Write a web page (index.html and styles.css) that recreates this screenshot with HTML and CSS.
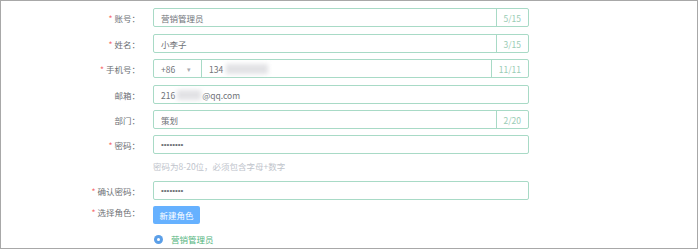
FILE: index.html
```
<!DOCTYPE html>
<html lang="zh-CN">
<head>
<meta charset="utf-8">
<title>用户表单</title>
<link rel="stylesheet" href="styles.css">
</head>
<body>
<div class="frame">
  <div class="form">
    <div class="row sp">
      <div class="label"><span class="req">*</span>账号：</div>
      <div class="field"><div class="inner">营销管理员</div><div class="count">5/15</div></div>
    </div>
    <div class="row">
      <div class="label"><span class="req">*</span>姓名：</div>
      <div class="field"><div class="inner">小李子</div><div class="count">3/15</div></div>
    </div>
    <div class="row sp">
      <div class="label"><span class="req">*</span>手机号：</div>
      <div class="field">
        <div class="select">+86<span class="arrow">▾</span></div>
        <div class="inner">134<span class="blur blur-phone"></span></div>
        <div class="count">11/11</div>
      </div>
    </div>
    <div class="row">
      <div class="label">邮箱：</div>
      <div class="field"><div class="inner">216<span class="blur blur-mail"></span>@qq.com</div></div>
    </div>
    <div class="row">
      <div class="label">部门：</div>
      <div class="field"><div class="inner">策划</div><div class="count">2/20</div></div>
    </div>
    <div class="row tight">
      <div class="label"><span class="req">*</span>密码：</div>
      <div class="field"><div class="inner dots">••••••••</div></div>
    </div>
    <div class="hint">密码为8-20位，必须包含字母+数字</div>
    <div class="row">
      <div class="label"><span class="req">*</span>确认密码：</div>
      <div class="field"><div class="inner dots">••••••••</div></div>
    </div>
    <div class="row btn-row">
      <div class="label"><span class="req">*</span>选择角色：</div>
      <div class="btn">新建角色</div>
    </div>
    <div class="radio-row">
      <span class="radio"><span class="dot"></span></span>
      <span class="radio-text">营销管理员</span>
    </div>
  </div>
</div>
</body>
</html>
```

FILE: styles.css
```
html, body {
  margin: 0;
  padding: 0;
  background: #ffffff;
}

body {
  font-family: "Noto Sans CJK SC", "Noto Sans", sans-serif;
  font-size: 8.5px;
  color: #6e7176;
}

.frame {
  width: 698px;
  height: 249px;
  box-sizing: border-box;
  border: 1px solid #a8a8a8;
  overflow: hidden;
}

.form {
  padding-top: 7px;
}

.row {
  display: flex;
  align-items: center;
  height: 19px;
  margin-bottom: 6px;
}

.row.sp {
  margin-bottom: 7px;
}

.row.tight {
  margin-bottom: 0;
}

.label {
  flex: 0 0 152px;
  box-sizing: border-box;
  padding-right: 13px;
  text-align: right;
  color: #6e7176;
  white-space: nowrap;
}

.req {
  color: #f56c6c;
  margin-right: 2px;
}

.field {
  width: 376px;
  height: 19px;
  box-sizing: border-box;
  border: 1px solid #a8dac6;
  border-radius: 2px;
  display: flex;
  align-items: stretch;
  background: #fff;
}

.inner {
  flex: 1;
  display: flex;
  align-items: center;
  padding-left: 7px;
  color: #707378;
  white-space: nowrap;
}

.dots {
  font-family: "Liberation Sans", sans-serif;
  font-size: 8px;
  letter-spacing: 0;
  color: #6e7176;
}

.count {
  display: flex;
  align-items: center;
  padding: 0 7px;
  border-left: 1px solid #a8dac6;
  color: #9accb5;
}

.select {
  flex: 0 0 48px;
  box-sizing: border-box;
  display: flex;
  align-items: center;
  padding-left: 7px;
  border-right: 1px solid #a8dac6;
  color: #707378;
}

.arrow {
  margin-left: 12px;
  font-size: 7px;
  color: #a8abb0;
}

.blur {
  display: inline-block;
  height: 10px;
  background: #e2e2e5;
  filter: blur(2px);
}

.blur-phone {
  width: 42px;
  margin-left: 3px;
}

.blur-mail {
  width: 24px;
  margin-left: 2px;
  margin-right: 1px;
}

.hint {
  margin-left: 152px;
  height: 27px;
  box-sizing: border-box;
  padding-top: 7px;
  line-height: 10px;
  color: #c0c4cc;
}

.btn-row {
  align-items: flex-start;
}

.btn {
  width: 47px;
  height: 18px;
  box-sizing: border-box;
  border-radius: 2px;
  background: #66b1ff;
  color: #ffffff;
  display: flex;
  align-items: center;
  justify-content: center;
}

.radio-row {
  display: flex;
  align-items: center;
  height: 16px;
  padding-left: 153px;
}

.radio {
  width: 9px;
  height: 9px;
  border-radius: 50%;
  background: #5b9fe8;
  display: flex;
  align-items: center;
  justify-content: center;
}

.dot {
  width: 3px;
  height: 3px;
  border-radius: 50%;
  background: #ffffff;
}

.radio-text {
  margin-left: 8px;
  color: #52b47c;
}
```
